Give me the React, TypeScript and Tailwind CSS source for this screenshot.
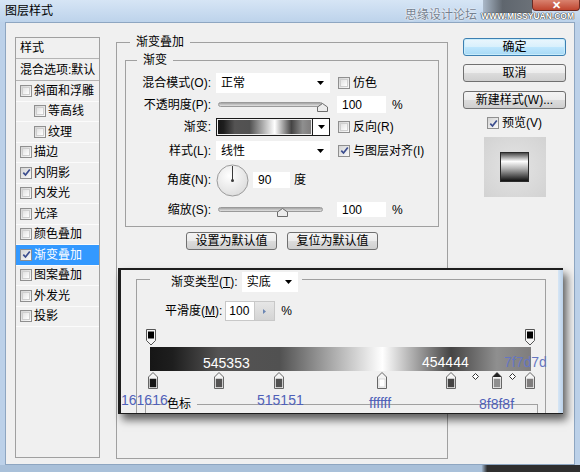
import React from "react";

function Tri() {
  return (
    <svg width="7" height="4" viewBox="0 0 7 4" className="shrink-0">
      <path d="M0 0H7L3.5 4Z" fill="#000" />
    </svg>
  );
}

function Box({ checked = false }: { checked?: boolean }) {
  return (
    <span className="flex h-[12px] w-[12px] shrink-0 items-center justify-center border border-[#8f8f8f] bg-[linear-gradient(135deg,#d4d4d4,#fafafa)]">
      {checked ? (
        <svg width="9" height="9" viewBox="0 0 9 9">
          <path d="M1.3 4.6L3.5 7L7.8 1.4" stroke="#3b4d8e" strokeWidth="1.7" fill="none" />
        </svg>
      ) : (
        <span className="h-[8px] w-[8px] border border-[#cfcfcf] bg-[linear-gradient(135deg,#e2e2e2,#ffffff)]" />
      )}
    </span>
  );
}

function Slider({ thumb }: { thumb: string }) {
  return (
    <div className="relative ml-[2px] w-[105px]">
      <div className="h-[5px] rounded-full border border-[#9a9a9a] bg-[linear-gradient(to_bottom,#a4a4a4,#e2e2e2)]" />
      <svg width="11" height="9" viewBox="0 0 11 9" className={`absolute top-[1px] ${thumb}`}>
        <path d="M0.5 8.5V4L5.5 0.5L10.5 4V8.5Z" fill="#ececec" stroke="#6c6c6c" />
      </svg>
    </div>
  );
}

function OpStop({ pos }: { pos: string }) {
  return (
    <svg width="10" height="17" viewBox="0 0 10 17" className={`absolute top-0 ${pos}`}>
      <path d="M0.5 0.5H9.5V11.5L5 16L0.5 11.5Z" fill="#f4f4f4" stroke="#555" />
      <rect x="2" y="2.5" width="6" height="7" fill="#000" />
    </svg>
  );
}

function ColStop({ pos, color, sel = false }: { pos: string; color: string; sel?: boolean }) {
  return (
    <svg width="10" height="17" viewBox="0 0 10 17" className={`absolute top-[1px] ${pos}`}>
      <path d="M5 0.5L9.5 5V16.5H0.5V5Z" fill="#f4f4f4" stroke="#666" />
      {sel ? <path d="M5 0.5L9.5 5H0.5Z" fill="#222" /> : null}
      <rect x="2" y="7" width="6" height="8" fill={color} stroke={color === "#ffffff" ? "#bbb" : color} strokeWidth="0.5" />
    </svg>
  );
}

function Diamond({ pos }: { pos: string }) {
  return (
    <svg width="7" height="7" viewBox="0 0 7 7" className={`absolute top-[2px] ${pos}`}>
      <path d="M3.5 0.5L6.5 3.5L3.5 6.5L0.5 3.5Z" fill="#fff" stroke="#333" />
    </svg>
  );
}

const items: { t: string; c?: boolean; sub?: boolean; sel?: boolean }[] = [
  { t: "斜面和浮雕" },
  { t: "等高线", sub: true },
  { t: "纹理", sub: true },
  { t: "描边" },
  { t: "内阴影", c: true },
  { t: "内发光" },
  { t: "光泽" },
  { t: "颜色叠加" },
  { t: "渐变叠加", c: true, sel: true },
  { t: "图案叠加" },
  { t: "外发光" },
  { t: "投影" },
];

const btn =
  "flex h-[18px] items-center justify-center rounded-[3px] border border-[#707070] bg-[linear-gradient(to_bottom,#f4f4f4_0%,#ececec_48%,#dcdcdc_52%,#cfcfcf_100%)] text-[12px]";

export default function App() {
  return (
    <div className="relative flex h-[472px] w-[580px] flex-col overflow-hidden bg-[#bcd1e9] font-['Liberation_Sans','Noto_Sans_CJK_SC',sans-serif] text-[12px] leading-[16px] text-black">
      {/* title bar */}
      <div className="flex h-[22px] bg-[linear-gradient(to_bottom,#d6e5f5,#bdd3eb)]">
        <div className="pl-[5px] pt-[3px]">图层样式</div>
        <div className="ml-auto flex w-[97px] items-start">
          <div className="h-[13px] w-[49px] bg-[linear-gradient(to_right,#aab8c8,#5f666e_40%,#6b7178)]" />
          <div className="flex h-[11px] w-[48px] items-center justify-center rounded-b-[4px] border border-t-0 border-[#6b2a22] bg-[linear-gradient(to_bottom,#d9826f,#c0452f)]">
            <span className="text-[11px] font-bold leading-[10px] text-white">✕</span>
          </div>
        </div>
      </div>
      {/* watermark */}
      <div className="absolute left-[405px] top-[8px] flex items-center">
        <span className="text-[12px] leading-[15px] text-[#74808f] [text-shadow:0_0_2px_#ffffff,0_0_1px_#ffffff]">思缘设计论坛</span>
        <span className="ml-[4px] text-[8.5px] font-bold leading-[10px] text-white [text-shadow:0_0_1px_#333,0_0_1px_#333,0_0_1px_#333]">WWW.MISSYUAN.COM</span>
      </div>

      {/* client */}
      <div className="mx-[5px] flex h-[443px] border border-[#8ea6c1] bg-[#f0f0f0] pl-[9px] pt-[14px]">
        {/* styles list */}
        <div className="flex h-[421px] w-[85px] shrink-0 flex-col border border-[#a0a0a0]">
          <div className="flex h-[21px] items-center border-b border-[#b4b4b4] pl-[4px]">样式</div>
          <div className="flex h-[22px] items-center border-b border-[#b4b4b4] pl-[4px] whitespace-nowrap">混合选项:默认</div>
          {items.map((it) => (
            <div
              key={it.t}
              className={`flex h-[20.5px] items-center gap-[2px] border-b border-[#fbfbfb] ${it.sub ? "pl-[18px]" : "pl-[4px]"} ${it.sel ? "bg-[#3399ff] text-white" : ""}`}
            >
              <Box checked={it.c} />
              <span className="whitespace-nowrap">{it.t}</span>
            </div>
          ))}
        </div>

        {/* main group */}
        <fieldset className="-mt-[3px] ml-[16px] h-[425px] w-[332px] shrink-0 border border-[#a0a0a0]">
          <legend className="ml-[13px] px-[6px]">渐变叠加</legend>
          <fieldset className="ml-[8px] mt-[2px] h-[175px] w-[314px] border border-[#a0a0a0]">
            <legend className="ml-[11px] px-[6px]">渐变</legend>

            <div className="mt-[5px] flex h-[20px] items-center">
              <span className="w-[85px] shrink-0 text-right">混合模式(O):</span>
              <div className="ml-[5px] flex h-[20px] w-[114px] items-center justify-between bg-white pl-[5px] pr-[6px]">
                <span>正常</span>
                <Tri />
              </div>
              <div className="ml-[8px] flex items-center gap-[3px]">
                <Box />
                <span>仿色</span>
              </div>
            </div>

            <div className="mt-[3px] flex h-[17px] items-center">
              <span className="w-[85px] shrink-0 text-right">不透明度(P):</span>
              <div className="ml-[5px] flex w-[114px] items-center">
                <Slider thumb="left-[99px]" />
              </div>
              <div className="ml-[7px] flex h-[17px] w-[49px] items-center bg-white pl-[5px]">100</div>
              <span className="ml-[6px]">%</span>
            </div>

            <div className="mt-[5px] flex h-[18px] items-center">
              <span className="w-[85px] shrink-0 text-right">渐变:</span>
              <div className="ml-[5px] flex">
                <div className="h-[18px] w-[97px] border border-[#1a1a1a] p-[1px]">
                  <div className="h-full w-full bg-[linear-gradient(to_right,#161616_0%,#1e1e1e_6%,#545353_18%,#515151_34%,#ffffff_61%,#454444_79%,#8f8f8f_91%,#7f7d7d_100%)]" />
                </div>
                <div className="flex h-[18px] w-[17px] items-center justify-center border border-l-0 border-[#1a1a1a] bg-white">
                  <Tri />
                </div>
              </div>
              <div className="ml-[8px] flex items-center gap-[3px]">
                <Box />
                <span>反向(R)</span>
              </div>
            </div>

            <div className="mt-[5px] flex h-[19px] items-center">
              <span className="w-[85px] shrink-0 text-right">样式(L):</span>
              <div className="ml-[5px] flex h-[19px] w-[114px] items-center justify-between bg-white pl-[5px] pr-[6px]">
                <span>线性</span>
                <Tri />
              </div>
              <div className="ml-[8px] flex items-center gap-[3px]">
                <Box checked />
                <span className="whitespace-nowrap">与图层对齐(I)</span>
              </div>
            </div>

            <div className="mt-[4px] flex h-[32px] items-center">
              <span className="w-[85px] shrink-0 text-right">角度(N):</span>
              <svg width="33" height="33" viewBox="0 0 33 33" className="ml-[5px] shrink-0">
                <defs>
                  <radialGradient id="dialg" cx="0.4" cy="0.35" r="0.7">
                    <stop offset="0" stopColor="#ffffff" />
                    <stop offset="1" stopColor="#dcdcdc" />
                  </radialGradient>
                </defs>
                <circle cx="16.5" cy="16.5" r="15.5" fill="url(#dialg)" stroke="#9b9b9b" />
                <line x1="16.5" y1="16.5" x2="16.5" y2="2" stroke="#3a3a3a" strokeWidth="1" />
                <circle cx="16.5" cy="16.5" r="1.5" fill="#3a3a3a" />
              </svg>
              <div className="ml-[4px] flex h-[16px] w-[37px] items-center bg-white pl-[5px]">90</div>
              <span className="ml-[4px]">度</span>
            </div>

            <div className="mt-[6px] flex h-[15px] items-center">
              <span className="w-[85px] shrink-0 text-right">缩放(S):</span>
              <div className="ml-[5px] flex w-[114px] items-center">
                <Slider thumb="left-[59px]" />
              </div>
              <div className="ml-[7px] flex h-[15px] w-[49px] items-center bg-white pl-[5px]">100</div>
              <span className="ml-[6px]">%</span>
            </div>
          </fieldset>

          <div className="mt-[5px] flex justify-center gap-[10px]">
            <div className={`${btn} w-[91px]`}>设置为默认值</div>
            <div className={`${btn} w-[91px]`}>复位为默认值</div>
          </div>
        </fieldset>

        {/* right column */}
        <div className="ml-[15px] mt-[1px] flex w-[103px] shrink-0 flex-col">
          <div className="flex h-[18px] items-center justify-center rounded-[3px] border border-[#3c7fb1] bg-[linear-gradient(to_bottom,#eaf6fd_0%,#d9f0fc_48%,#bee6fd_52%,#a7d9f5_100%)] shadow-[inset_0_0_0_1px_#c8ecfb]">
            确定
          </div>
          <div className={`${btn} mt-[8px]`}>取消</div>
          <div className={`${btn} mt-[9px]`}>新建样式(W)...</div>
          <div className="mt-[7px] flex h-[14px] items-center justify-center gap-[3px]">
            <Box checked />
            <span>预览(V)</span>
          </div>
          <div className="mx-auto mt-[7px] flex h-[60px] w-[62px] items-center justify-center bg-[radial-gradient(circle,#e4e4e4,#d2d2d2)]">
            <div className="h-[30px] w-[29px] border border-[#2a2a2a] bg-[linear-gradient(to_bottom,#484848_0%,#fefefe_30%,#b5b5b5_55%,#5a5a5a_80%,#111111_100%)]" />
          </div>
        </div>
      </div>
      <div className="h-[7px] bg-[linear-gradient(to_right,#a9c0d9_83%,#2f2f2f_84%)]" />

      {/* pasted gradient editor */}
      <div className="absolute left-[118px] top-[268px] flex h-[146px] w-[445px] border-b border-l-[3px] border-t-2 border-[#1e1e1e] bg-[#f0f0f0] shadow-[4px_6px_8px_rgba(0,0,0,0.6)]">
        <div className="relative flex-1 overflow-hidden pt-[2px]">
          <fieldset className="ml-[15px] h-[170px] w-[410px] border border-[#a0a0a0]">
            <legend className="ml-[13px] h-[14px] pr-[4px]">
              <div className="flex h-[20px] items-center">
                <span className="pl-[21px] whitespace-nowrap">
                  渐变类型(<u>T</u>):
                </span>
                <div className="ml-[4px] flex h-[20px] w-[56px] items-center justify-between bg-white pl-[5px] pr-[6px]">
                  <span>实底</span>
                  <Tri />
                </div>
              </div>
            </legend>

            <div className="mt-[15px] flex h-[20px] items-center pl-[28px]">
              <span className="whitespace-nowrap">
                平滑度(<u>M</u>):
              </span>
              <div className="ml-[3px] flex h-[20px] border border-[#c8c8c8]">
                <div className="flex w-[28px] items-center bg-white pl-[3px]">100</div>
                <div className="flex w-[20px] items-center justify-center border-l border-[#c8c8c8] bg-[linear-gradient(to_bottom,#e6e6e6,#d4d4d4)]">
                  <svg width="3" height="5" viewBox="0 0 3 5">
                    <path d="M0 0L3 2.5L0 5Z" fill="#6b86b3" />
                  </svg>
                </div>
              </div>
              <span className="ml-[6px]">%</span>
            </div>

            <div className="relative ml-[13px] mt-[8px] w-[381px]">
              <div className="relative h-[18px]">
                <OpStop pos="left-[-4px]" />
                <OpStop pos="left-[375px]" />
              </div>
              <div className="h-[24px] bg-[linear-gradient(to_right,#161616_0%,#1e1e1e_6%,#545353_18%,#515151_34%,#ffffff_61%,#454444_79%,#8f8f8f_91%,#7f7d7d_100%)]" />
              <div className="relative h-[18px]">
                <ColStop pos="left-[-2px]" color="#161616" />
                <ColStop pos="left-[64px]" color="#545353" />
                <ColStop pos="left-[124px]" color="#515151" />
                <ColStop pos="left-[227px]" color="#ffffff" />
                <ColStop pos="left-[296px]" color="#454444" />
                <Diamond pos="left-[322px]" />
                <ColStop pos="left-[342px]" color="#8f8f8f" sel />
                <Diamond pos="left-[359px]" />
                <ColStop pos="left-[375px]" color="#7f7d7d" />
              </div>

              <span className="absolute left-[53px] top-[26px] text-[14px] text-white">545353</span>
              <span className="absolute left-[272px] top-[25px] text-[14px] text-white">454444</span>
              <span className="absolute left-[354px] top-[25px] text-[14px] text-[#6576c2]">7f7d7d</span>
              <span className="absolute left-[-29px] top-[63px] text-[14px] text-[#4f60b8]">161616</span>
              <span className="absolute left-[107px] top-[63px] text-[14px] text-[#4f60b8]">515151</span>
              <span className="absolute left-[219px] top-[66px] text-[14px] text-[#4f60b8]">ffffff</span>
              <span className="absolute left-[329px] top-[67px] text-[14px] text-[#4f60b8]">8f8f8f</span>
            </div>

            <fieldset className="ml-[8px] mt-[7px] h-[40px] w-[393px] border border-[#a0a0a0]">
              <legend className="ml-[19px] pl-[2px] pr-[6px]">色标</legend>
            </fieldset>
          </fieldset>
        </div>
        <div className="w-[5px] bg-[linear-gradient(to_right,#d6e6f5,#bcd2ea)]" />
      </div>
    </div>
  );
}
